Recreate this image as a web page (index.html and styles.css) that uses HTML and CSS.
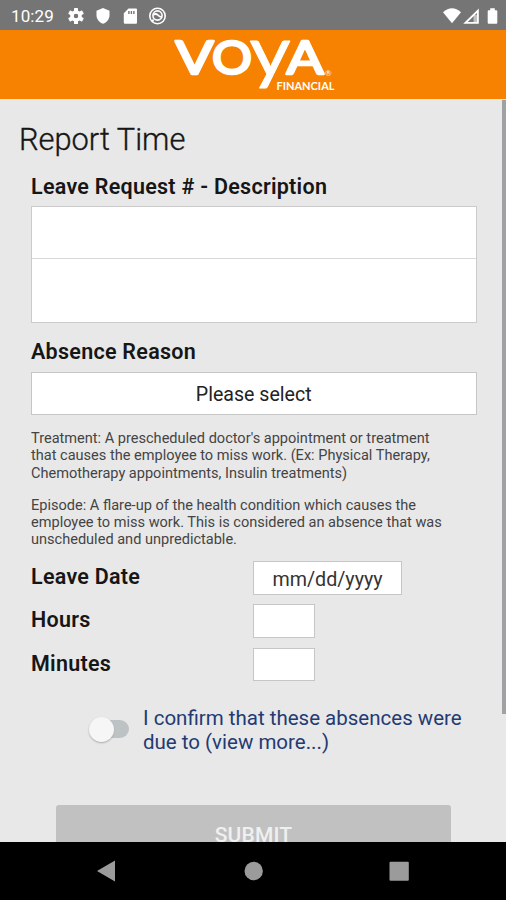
FILE: index.html
```html
<!DOCTYPE html>
<html lang="en">
<head>
<meta charset="utf-8">
<title>Report Time</title>
<link rel="stylesheet" href="styles.css">
</head>
<body>
<div class="app">
  <header class="status">
    <span class="clock">10:29</span>
    <svg class="status-icons" width="102" height="20" viewBox="0 0 102 20" fill="#fff">
      <g transform="translate(9 10)">
        <circle r="4.1" fill="none" stroke="#fff" stroke-width="3.4"/>
        <rect x="-2" y="-8" width="4" height="16" rx=".6" mask="url(#hub)"/><rect x="-2" y="-8" width="4" height="16" rx=".6" transform="rotate(60)" mask="url(#hub)"/><rect x="-2" y="-8" width="4" height="16" rx=".6" transform="rotate(120)" mask="url(#hub)"/>
      </g>
      <mask id="hub" maskUnits="userSpaceOnUse" x="-9" y="-9" width="18" height="18"><rect x="-9" y="-9" width="18" height="18" fill="#fff"/><circle r="2.5" fill="#000"/></mask>
      <path d="M36 2l6.500 2.800v4.500c0 3.800-2.700 7.200-6.500 8.500-3.800-1.300-6.500-4.700-6.500-8.500V4.800z"/>
      <path fill-rule="evenodd" d="M61.500 2.500H69q1 0 1 1V16.500q0 1.200-1 1.200H58q-1.200 0-1.200-1.200V7.200zM61.200 5v3h1.400V5zm2.500 0v3h1.400V5zm2.500 0v3h1.400V5z"/>
      <g fill="none" stroke="#fff" stroke-width="1.600"><circle cx="90.500" cy="10" r="7.700"/><circle cx="90.500" cy="9.500" r="4.600"/><path d="M86.300 8.800q2.700-1.800 4.500.2t4 2.200M86.500 13.500l-1.300 2.200" stroke-width="1.800"/></g>
    </svg>
    <svg class="signal-icons" width="58" height="20" viewBox="0 0 58 20" fill="#fff">
      <path d="M1 6.200Q10 -1.600 19 6.200L10 17.300z"/>
      <path fill-rule="evenodd" d="M36.800 2.500V17.800H21.200zM34.900 7V16H25.700z"/>
      <path d="M31.500 9h3.400v8h-3.400z" opacity=".55"/>
      <path d="M48.200 2.200h4.600v2h1.500q1 0 1 1v11.500q0 1-1 1h-7.600q-1 0-1-1V5.200q0-1 1-1h1.500z"/>
    </svg>
  </header>
  <div class="brand">
    <svg width="166" height="64" viewBox="172 34 166 64" class="logo">
      <text class="word" x="175.500" y="74.300" textLength="38" lengthAdjust="spacingAndGlyphs">V</text>
      <text class="word" x="212" y="74.300" textLength="40" lengthAdjust="spacingAndGlyphs">O</text>
      <text class="word tail" x="249.500" y="76" textLength="41" lengthAdjust="spacingAndGlyphs">y</text>
      <text class="word" x="286.500" y="74.300" textLength="37" lengthAdjust="spacingAndGlyphs">A</text>
      <text class="reg" x="325" y="76">®</text>
      <text class="sub" x="276.500" y="89.500" textLength="58" lengthAdjust="spacingAndGlyphs">FINANCIAL</text>
    </svg>
  </div>
  <main class="screen">
    <div class="content">
      <h1>Report Time</h1>
      <section class="form">
        <h2 class="request-title">Leave Request # - Description</h2>
        <div class="request-list"><div class="request-row"></div><div class="request-row"></div></div>
        <h2 class="reason-title">Absence Reason</h2>
        <div class="select">Please select</div>
        <p class="note treatment">Treatment: A prescheduled doctor's appointment or treatment<br>that causes the employee to miss work. (Ex: Physical Therapy,<br>Chemotherapy appointments, Insulin treatments)</p>
        <p class="note episode">Episode: A flare-up of the health condition which causes the<br>employee to miss work. This is considered an absence that was<br>unscheduled and unpredictable.</p>
        <div class="fields">
          <h2>Leave Date</h2><div class="input date">mm/dd/yyyy</div>
          <h2>Hours</h2><div class="input"></div>
          <h2>Minutes</h2><div class="input"></div>
        </div>
      </section>
      <div class="confirm">
        <div class="switch"><span class="knob"></span></div>
        <div class="confirm-text">I confirm that these absences were<br>due to (view more...)</div>
      </div>
      <div class="submit">SUBMIT</div>
    </div>
    <div class="scroll"></div>
  </main>
  <nav class="nav">
    <svg width="506" height="58" viewBox="0 0 506 58" fill="#9b9b9b"><path d="M97 29l18-10.500v21z"/><circle cx="253.700" cy="29" r="9.200"/><rect x="389.500" y="19.700" width="19.300" height="19" rx="1"/></svg>
  </nav>
</div>
</body>
</html>
```
FILE: styles.css
```css
* { box-sizing: border-box; margin: 0; padding: 0; }
body { font-family: Roboto, sans-serif; color: #161616; background: #e8e8e8; }
.app { width: 506px; height: 900px; display: flex; flex-direction: column; overflow: hidden; }
.status { height: 30px; flex: none; background: #757575; display: flex; align-items: center; padding: 1px 6px 0 11px; color: #fff; }
.clock { font-size: 17px; width: 56px; letter-spacing: .1px; }
.signal-icons { margin-left: auto; }
.brand { height: 69px; flex: none; background: #f78100; padding: 4px 0 0 172px; }
.logo { display: block; overflow: visible; fill: #fff; font-family: Lato, sans-serif; }
.word { font-size: 46px; font-weight: 400; stroke: #fff; stroke-width: 2.6px; stroke-linejoin: round; }
.tail { font-size: 69px; stroke-width: .8px; }
.reg { font-size: 8px; font-weight: 400; }
.sub { font-size: 10.5px; font-weight: 700; }
.screen { height: 743px; flex: none; display: flex; overflow: hidden; border-top: 1px solid #fbe3cc; }
.content { flex: 1; }
.scroll { width: 4.5px; height: 614px; background: #9fa1a3; }
h1 { font-size: 30.800px; font-weight: 300; -webkit-text-stroke: .35px #161616; line-height: 36px; padding: 22px 0 0 19px; }
h2 { font-size: 21.500px; font-weight: 600; line-height: 26px; letter-spacing: .27px; }
.form { padding: 0 25px 0 31px; }
.request-title { margin-top: 16px; }
.request-list { height: 117px; margin-top: 6px; background: #fff; border: 1px solid #cbcbcb; }
.request-row:first-child { height: 52px; border-bottom: 1px solid #d9d9d9; }
.reason-title { margin-top: 16px; }
.select { margin-top: 7px; height: 43px; border: 1px solid #c5c7c7; background: #fff; text-align: center; font-size: 19.600px; line-height: 43px; color: #222; }
.note { font-size: 14.560px; line-height: 17.300px; color: #444; white-space: nowrap; }
.treatment { margin-top: 15px; }
.episode { margin-top: 15px; }
.fields { display: grid; grid-template-columns: 222px auto; grid-template-rows: 34px 34px 33px; row-gap: 9.500px; margin-top: 12px; justify-content: start; }
.fields h2 { line-height: 32px; }
.input { width: 62px; background: #fff; border: 1px solid #c5c7c7; }
.date { width: 149px; text-align: center; font-size: 19.700px; line-height: 35px; color: #333; }
.confirm { display: flex; margin: 25px 0 0 90px; }
.switch { width: 39px; height: 18px; margin-top: 14px; margin-right: 14px; padding-left: 12px; background: #bdc3c5; background-clip: content-box; border-radius: 9px; }
.knob { display: block; width: 25px; height: 25px; border-radius: 50%; background: #f6f6f6; box-shadow: 0 1px 2px #aaa; margin: -3px 0 0 -13px; }
.confirm-text { font-size: 20.500px; line-height: 24.500px; color: #243a73; white-space: nowrap; }
.submit { width: 395px; height: 60px; margin: 50px 0 0 56px; border-radius: 3px; background: #c1c1c1; color: #f0f0f0; font-size: 21px; font-weight: 500; letter-spacing: .2px; text-align: center; line-height: 60px; }
.nav { height: 58px; flex: none; background: #000; }
.nav svg { display: block; }
```
